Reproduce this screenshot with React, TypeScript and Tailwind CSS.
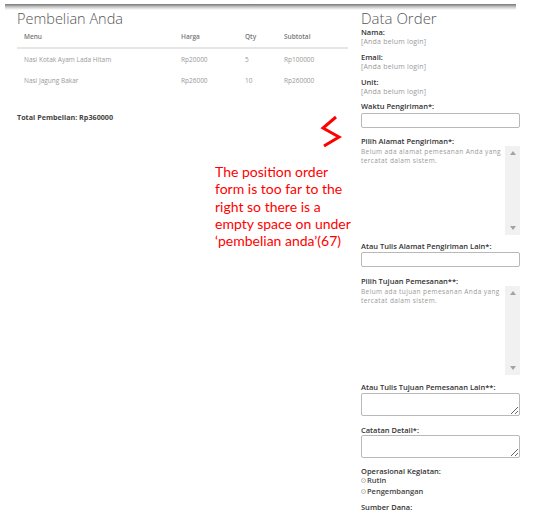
import type { ReactNode } from 'react'

const items = [
  { menu: 'Nasi Kotak Ayam Lada Hitam', harga: 'Rp20000', qty: '5', subtotal: 'Rp100000' },
  { menu: 'Nasi Jagung Bakar', harga: 'Rp26000', qty: '10', subtotal: 'Rp260000' },
]

function Label({ children, className = '' }: { children: ReactNode; className?: string }) {
  return <div className={`text-[7.5px] font-semibold leading-[9px] text-[#333] ${className}`}>{children}</div>
}

function Value({ children }: { children: ReactNode }) {
  return <div className="text-[7px] leading-[9px] tracking-[0.2px] text-[#999]">{children}</div>
}

// fake listbox with the old-style scrollbar (arrows top & bottom)
function ListBox({ lines }: { lines: string[] }) {
  return (
    <div className="flex h-[89px] w-[159px]">
      <div className="flex-1 pt-[1px] text-[6.5px] leading-[9.3px] tracking-[0.4px] text-[#999]">
        {lines.map((l) => (
          <div key={l} className="whitespace-nowrap">
            {l}
          </div>
        ))}
      </div>
      <div className="flex w-[15px] flex-col items-center justify-between bg-[#f1f1f1] py-[5px]">
        <svg width="6" height="4" viewBox="0 0 6 4">
          <path d="M0 4 L3 0 L6 4 Z" fill="#a3a3a3" />
        </svg>
        <svg width="6" height="4" viewBox="0 0 6 4">
          <path d="M0 0 L3 4 L6 0 Z" fill="#a3a3a3" />
        </svg>
      </div>
    </div>
  )
}

function Radio({ children }: { children: ReactNode }) {
  return (
    <div className="flex items-center gap-[1px] text-[7.5px] font-semibold text-[#444]">
      <span className="flex h-[5px] w-[5px] items-center justify-center rounded-full border border-[#b5b5b5]">
        <span className="h-[1px] w-[1px] rounded-full bg-[#ccc]" />
      </span>
      {children}
    </div>
  )
}

export default function App() {
  return (
    <div className="relative h-[513px] w-[535px] overflow-hidden bg-white font-['Open_Sans',sans-serif]">
      <div className="mx-[5px] mt-[4px] h-[6px] w-[511px] bg-linear-to-b from-[#777] via-[#c9c9c9] to-white" />

      <div className="flex">
        {/* Pembelian Anda */}
        <div className="ml-[17px] w-[331px]">
          <h2 className="text-[14.5px] font-light leading-[17px] text-[#555]">Pembelian Anda</h2>
          <div className="grid grid-cols-[157px_64px_39px_1fr] border-b-2 border-[#e6e6e6] text-[6.5px] font-semibold leading-[20px] text-[#777]">
            <div className="pl-[7px]">Menu</div>
            <div className="pl-[7px]">Harga</div>
            <div className="pl-[7px]">Qty</div>
            <div className="pl-[7px]">Subtotal</div>
          </div>
          {items.map((it) => (
            <div key={it.menu} className="grid grid-cols-[157px_64px_39px_1fr] text-[6.5px] leading-[21px] text-[#999]">
              <div className="pl-[7px]">{it.menu}</div>
              <div className="pl-[7px]">{it.harga}</div>
              <div className="pl-[7px]">{it.qty}</div>
              <div className="pl-[7px]">{it.subtotal}</div>
            </div>
          ))}
          <div className="mt-[21px] text-[7.2px] font-bold leading-[10px] text-[#444]">Total Pembelian: Rp360000</div>
        </div>

        {/* Data Order */}
        <div className="ml-[13px] w-[159px]">
          <h2 className="text-[15px] font-light leading-[17px] text-[#555]">Data Order</h2>
          <Label className="leading-[10px]">Nama:</Label>
          <Value>[Anda belum login]</Value>
          <Label className="mt-[6px] leading-[10px]">Email:</Label>
          <Value>[Anda belum login]</Value>
          <Label className="mt-[6px] leading-[10px]">Unit:</Label>
          <Value>[Anda belum login]</Value>
          <Label className="mt-[6px]">Waktu Pengiriman*:</Label>
          <input readOnly className="mt-[2px] block h-[15px] w-[159px] rounded-[2px] border border-[#b9b9b9] bg-white" />

          <Label className="mt-[9px]">Pilih Alamat Pengiriman*:</Label>
          <ListBox lines={['Belum ada alamat pemesanan Anda yang', 'tercatat dalam sistem.']} />

          <Label className="mt-[7px]">Atau Tulis Alamat Pengiriman Lain*:</Label>
          <input readOnly className="mt-[1px] block h-[15px] w-[159px] rounded-[2px] border border-[#b9b9b9] bg-white" />

          <Label className="mt-[10px]">Pilih Tujuan Pemesanan**:</Label>
          <ListBox lines={['Belum ada tujuan pemesanan Anda yang', 'tercatat dalam sistem.']} />

          <Label className="mt-[8px]">Atau Tulis Tujuan Pemesanan Lain**:</Label>
          <textarea readOnly className="mt-[1px] block h-[23px] w-[159px] rounded-[2px] border border-[#b9b9b9] bg-white" />

          <Label className="mt-[10px]">Catatan Detail*:</Label>
          <textarea readOnly className="block h-[23px] w-[159px] rounded-[2px] border border-[#b9b9b9] bg-white" />

          <Label className="mt-[9px]">Operasional Kegiatan:</Label>
          <div className="-mt-[1px] leading-[10px]">
            <Radio>Rutin</Radio>
          </div>
          <div className="mt-[1px] leading-[10px]">
            <Radio>Pengembangan</Radio>
          </div>
          <Label className="mt-[7px]">Sumber Dana:</Label>
        </div>
      </div>

      {/* review annotation drawn over the page */}
      <svg className="absolute left-[318px] top-[113px]" width="28" height="38" viewBox="0 0 28 38">
        <polyline points="18,4 5,15 21,24 6,33" fill="none" stroke="#f00" strokeWidth="3" strokeLinejoin="miter" />
      </svg>
      <div className="absolute left-[215px] top-[163px] font-['Lato',sans-serif] text-[14px] leading-[17.3px] text-[#f00]">
        The position order
        <br />
        form is too far to the
        <br />
        right so there is a
        <br />
        empty space on under
        <br />
        ‘pembelian anda’(67)
      </div>
    </div>
  )
}
